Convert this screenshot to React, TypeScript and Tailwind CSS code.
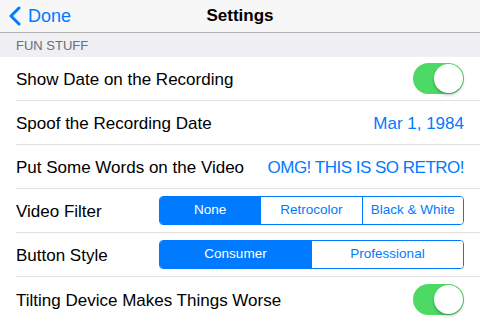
import { useState } from "react";

const BLUE = "text-[#007aff]";

function Toggle({ on }: { on: boolean }) {
  return (
    <div
      className={`relative h-[31px] w-[51px] shrink-0 rounded-full ${
        on ? "bg-[#4cd964]" : "bg-[#e5e5ea]"
      }`}
    >
      <div
        className={`absolute top-[1px] h-[29px] w-[29px] rounded-full bg-white shadow-[0_2px_3px_rgba(0,0,0,0.25)] ${
          on ? "right-[1px]" : "left-[1px]"
        }`}
      />
    </div>
  );
}

function Segmented({ options, selected }: { options: string[]; selected: number }) {
  return (
    <div className="flex h-[29px] w-[305px] shrink-0 overflow-hidden rounded-[4px] border border-[#007aff]">
      {options.map((o, i) => (
        <div
          key={o}
          className={`flex flex-1 items-center justify-center text-[13.5px] ${
            i > 0 ? "border-l border-[#007aff]" : ""
          } ${i === selected ? "bg-[#007aff] text-white" : "bg-white text-[#007aff]"}`}
        >
          {o}
        </div>
      ))}
    </div>
  );
}

function Row({ label, children, last }: { label: string; children: React.ReactNode; last?: boolean }) {
  return (
    <div className="pl-4">
      <div
        className={`flex h-[44px] items-center justify-between pr-4 ${
          last ? "" : "border-b border-[#e0e0e4]"
        }`}
      >
        <span className="pt-[3px] text-[17px] text-black">{label}</span>
        {children}
      </div>
    </div>
  );
}

export default function App() {
  const [filter] = useState(0);
  const [style] = useState(0);

  return (
    <div
      className="h-[320px] w-[480px] overflow-hidden bg-[#efeff4]"
      style={{ fontFamily: "'Liberation Sans', Arial, sans-serif" }}
    >
      <div className="relative flex h-[33px] items-center border-b border-[#b2b2b2] bg-[#f7f7f7]">
        <div className={`flex items-center pl-[8px] ${BLUE}`}>
          <svg width="14" height="20" viewBox="0 0 14 20" className="mr-[6px]">
            <path d="M11 2 L3 10 L11 18" fill="none" stroke="#007aff" strokeWidth="3" strokeLinecap="round" strokeLinejoin="round" />
          </svg>
          <span className="text-[18px]">Done</span>
        </div>
        <div className="absolute inset-x-0 text-center text-[17px] font-bold text-black">Settings</div>
      </div>

      <div className="flex h-[24px] items-center pl-4 pt-[1px] text-[13px] text-[#6d6d72]">FUN STUFF</div>

      <div className="bg-white">
        <Row label="Show Date on the Recording">
          <Toggle on />
        </Row>
        <Row label="Spoof the Recording Date">
          <span className={`pt-[3px] text-[17px] ${BLUE}`}>Mar 1, 1984</span>
        </Row>
        <Row label="Put Some Words on the Video">
          <span className={`pt-[3px] text-[17px] tracking-[-0.5px] ${BLUE}`}>OMG! THIS IS SO RETRO!</span>
        </Row>
        <Row label="Video Filter">
          <Segmented options={["None", "Retrocolor", "Black & White"]} selected={filter} />
        </Row>
        <Row label="Button Style">
          <Segmented options={["Consumer", "Professional"]} selected={style} />
        </Row>
        <Row label="Tilting Device Makes Things Worse" last>
          <Toggle on />
        </Row>
      </div>
    </div>
  );
}
